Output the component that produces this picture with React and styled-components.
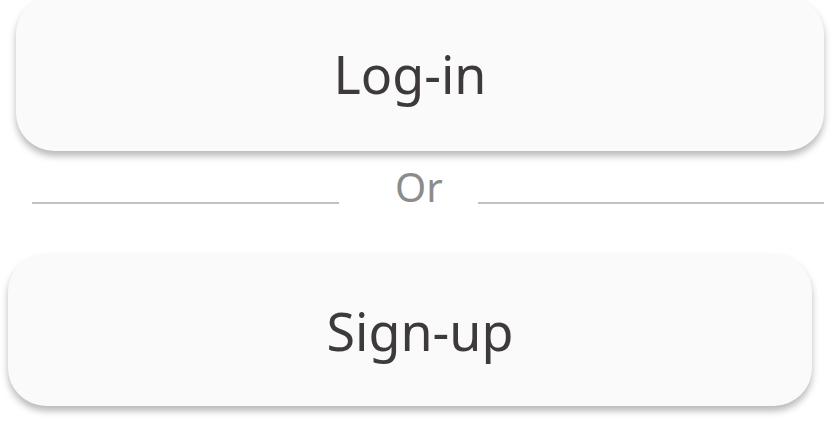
import React from 'react'
import styled, { createGlobalStyle } from 'styled-components'

const GlobalStyle = createGlobalStyle`
    html, body {
        margin: 0;
        padding: 0;
        background: #ffffff;
    }
    body {
        font-family: "Noto Sans", "Open Sans", sans-serif;
        overflow: hidden;
    }
`

const App = () => {
    return (
        <>
            <GlobalStyle />
            <Page>
                <AuthButton $top={-4} $left={16} $right={8} $height={155} $shift={-10}>
                    Log-in
                </AuthButton>

                <Divider>
                    <Line $width={307} />
                    <OrText>Or</OrText>
                    <Line />
                </Divider>

                <AuthButton $top={40} $left={8} $right={20} $height={152} $shift={10}>
                    Sign-up
                </AuthButton>
            </Page>
        </>
    )
}

const Page = styled.main`
    display: flex;
    flex-direction: column;
    width: 832px;
    height: 422px;
`

// $shift nudges the label off the button centre (negative = left)
const AuthButton = styled.button`
    display: flex;
    align-items: center;
    justify-content: center;
    height: ${(p) => p.$height}px;
    margin: ${(p) => p.$top}px ${(p) => p.$right}px 0 ${(p) => p.$left}px;
    padding: 0 ${(p) => Math.max(0, -p.$shift * 2)}px 0 ${(p) => Math.max(0, p.$shift * 2)}px;
    border: none;
    border-radius: 38px;
    background: #fafafa;
    box-shadow: 0 5px 7px rgba(0, 0, 0, 0.28);
    font-family: "Noto Sans", "Open Sans", sans-serif;
    font-size: 52px;
    font-weight: 400;
    color: #3e3a3a;
    cursor: pointer;
`

const Divider = styled.div`
    display: flex;
    align-items: flex-start;
    margin: 9px 8px 0 32px;
    height: 54px;
`

const Line = styled.div`
    flex: ${(p) => (p.$width ? `0 0 ${p.$width}px` : '1')};
    height: 2px;
    margin-top: 42px;
    background: #c2c2c2;
`

const OrText = styled.span`
    margin: 0 35px 0 56px;
    font-size: 40px;
    line-height: 54px;
    color: #8c8c8c;
`

export default App
